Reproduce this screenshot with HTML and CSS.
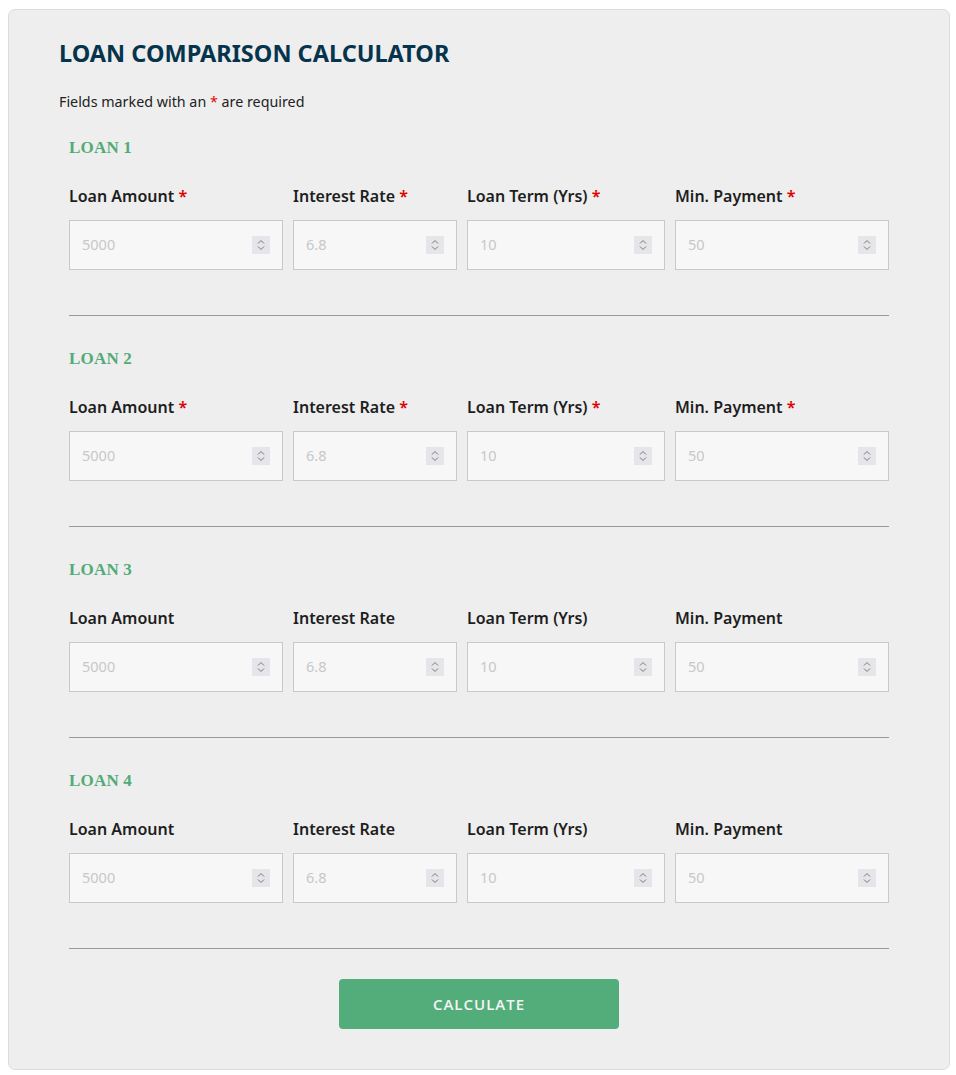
FILE: index.html
```html
<!DOCTYPE html>
<html>
<head>
<meta charset="utf-8">
<link rel="stylesheet" href="styles.css">
</head>
<body>
<div class="calc">
  <h1 class="title">LOAN COMPARISON CALCULATOR</h1>
  <p class="note">Fields marked with an <span class="req">*</span> are required</p>

  <section class="loan">
    <h2 class="loan-title">LOAN 1</h2>
    <div class="grid">
      <label class="lbl">Loan Amount <span class="req">*</span></label>
      <label class="lbl">Interest Rate <span class="req">*</span></label>
      <label class="lbl">Loan Term (Yrs) <span class="req">*</span></label>
      <label class="lbl">Min. Payment <span class="req">*</span></label>
      <div class="field"><input class="inp" type="text" size="4" placeholder="5000"><span class="spin"><svg width="18" height="18" viewBox="0 0 18 18"><polyline points="6,7.5 9,4.5 12,7.5" fill="none" stroke="#777" stroke-width="1"/><polyline points="6,10.5 9,13.5 12,10.5" fill="none" stroke="#777" stroke-width="1"/></svg></span></div>
      <div class="field"><input class="inp" type="text" size="4" placeholder="6.8"><span class="spin"><svg width="18" height="18" viewBox="0 0 18 18"><polyline points="6,7.5 9,4.5 12,7.5" fill="none" stroke="#777" stroke-width="1"/><polyline points="6,10.5 9,13.5 12,10.5" fill="none" stroke="#777" stroke-width="1"/></svg></span></div>
      <div class="field"><input class="inp" type="text" size="4" placeholder="10"><span class="spin"><svg width="18" height="18" viewBox="0 0 18 18"><polyline points="6,7.5 9,4.5 12,7.5" fill="none" stroke="#777" stroke-width="1"/><polyline points="6,10.5 9,13.5 12,10.5" fill="none" stroke="#777" stroke-width="1"/></svg></span></div>
      <div class="field"><input class="inp" type="text" size="4" placeholder="50"><span class="spin"><svg width="18" height="18" viewBox="0 0 18 18"><polyline points="6,7.5 9,4.5 12,7.5" fill="none" stroke="#777" stroke-width="1"/><polyline points="6,10.5 9,13.5 12,10.5" fill="none" stroke="#777" stroke-width="1"/></svg></span></div>
    </div>
    <hr class="divider">
  </section>

  <section class="loan">
    <h2 class="loan-title">LOAN 2</h2>
    <div class="grid">
      <label class="lbl">Loan Amount <span class="req">*</span></label>
      <label class="lbl">Interest Rate <span class="req">*</span></label>
      <label class="lbl">Loan Term (Yrs) <span class="req">*</span></label>
      <label class="lbl">Min. Payment <span class="req">*</span></label>
      <div class="field"><input class="inp" type="text" size="4" placeholder="5000"><span class="spin"><svg width="18" height="18" viewBox="0 0 18 18"><polyline points="6,7.5 9,4.5 12,7.5" fill="none" stroke="#777" stroke-width="1"/><polyline points="6,10.5 9,13.5 12,10.5" fill="none" stroke="#777" stroke-width="1"/></svg></span></div>
      <div class="field"><input class="inp" type="text" size="4" placeholder="6.8"><span class="spin"><svg width="18" height="18" viewBox="0 0 18 18"><polyline points="6,7.5 9,4.5 12,7.5" fill="none" stroke="#777" stroke-width="1"/><polyline points="6,10.5 9,13.5 12,10.5" fill="none" stroke="#777" stroke-width="1"/></svg></span></div>
      <div class="field"><input class="inp" type="text" size="4" placeholder="10"><span class="spin"><svg width="18" height="18" viewBox="0 0 18 18"><polyline points="6,7.5 9,4.5 12,7.5" fill="none" stroke="#777" stroke-width="1"/><polyline points="6,10.5 9,13.5 12,10.5" fill="none" stroke="#777" stroke-width="1"/></svg></span></div>
      <div class="field"><input class="inp" type="text" size="4" placeholder="50"><span class="spin"><svg width="18" height="18" viewBox="0 0 18 18"><polyline points="6,7.5 9,4.5 12,7.5" fill="none" stroke="#777" stroke-width="1"/><polyline points="6,10.5 9,13.5 12,10.5" fill="none" stroke="#777" stroke-width="1"/></svg></span></div>
    </div>
    <hr class="divider">
  </section>

  <section class="loan">
    <h2 class="loan-title">LOAN 3</h2>
    <div class="grid">
      <label class="lbl">Loan Amount</label>
      <label class="lbl">Interest Rate</label>
      <label class="lbl">Loan Term (Yrs)</label>
      <label class="lbl">Min. Payment</label>
      <div class="field"><input class="inp" type="text" size="4" placeholder="5000"><span class="spin"><svg width="18" height="18" viewBox="0 0 18 18"><polyline points="6,7.5 9,4.5 12,7.5" fill="none" stroke="#777" stroke-width="1"/><polyline points="6,10.5 9,13.5 12,10.5" fill="none" stroke="#777" stroke-width="1"/></svg></span></div>
      <div class="field"><input class="inp" type="text" size="4" placeholder="6.8"><span class="spin"><svg width="18" height="18" viewBox="0 0 18 18"><polyline points="6,7.5 9,4.5 12,7.5" fill="none" stroke="#777" stroke-width="1"/><polyline points="6,10.5 9,13.5 12,10.5" fill="none" stroke="#777" stroke-width="1"/></svg></span></div>
      <div class="field"><input class="inp" type="text" size="4" placeholder="10"><span class="spin"><svg width="18" height="18" viewBox="0 0 18 18"><polyline points="6,7.5 9,4.5 12,7.5" fill="none" stroke="#777" stroke-width="1"/><polyline points="6,10.5 9,13.5 12,10.5" fill="none" stroke="#777" stroke-width="1"/></svg></span></div>
      <div class="field"><input class="inp" type="text" size="4" placeholder="50"><span class="spin"><svg width="18" height="18" viewBox="0 0 18 18"><polyline points="6,7.5 9,4.5 12,7.5" fill="none" stroke="#777" stroke-width="1"/><polyline points="6,10.5 9,13.5 12,10.5" fill="none" stroke="#777" stroke-width="1"/></svg></span></div>
    </div>
    <hr class="divider">
  </section>

  <section class="loan">
    <h2 class="loan-title">LOAN 4</h2>
    <div class="grid">
      <label class="lbl">Loan Amount</label>
      <label class="lbl">Interest Rate</label>
      <label class="lbl">Loan Term (Yrs)</label>
      <label class="lbl">Min. Payment</label>
      <div class="field"><input class="inp" type="text" size="4" placeholder="5000"><span class="spin"><svg width="18" height="18" viewBox="0 0 18 18"><polyline points="6,7.5 9,4.5 12,7.5" fill="none" stroke="#777" stroke-width="1"/><polyline points="6,10.5 9,13.5 12,10.5" fill="none" stroke="#777" stroke-width="1"/></svg></span></div>
      <div class="field"><input class="inp" type="text" size="4" placeholder="6.8"><span class="spin"><svg width="18" height="18" viewBox="0 0 18 18"><polyline points="6,7.5 9,4.5 12,7.5" fill="none" stroke="#777" stroke-width="1"/><polyline points="6,10.5 9,13.5 12,10.5" fill="none" stroke="#777" stroke-width="1"/></svg></span></div>
      <div class="field"><input class="inp" type="text" size="4" placeholder="10"><span class="spin"><svg width="18" height="18" viewBox="0 0 18 18"><polyline points="6,7.5 9,4.5 12,7.5" fill="none" stroke="#777" stroke-width="1"/><polyline points="6,10.5 9,13.5 12,10.5" fill="none" stroke="#777" stroke-width="1"/></svg></span></div>
      <div class="field"><input class="inp" type="text" size="4" placeholder="50"><span class="spin"><svg width="18" height="18" viewBox="0 0 18 18"><polyline points="6,7.5 9,4.5 12,7.5" fill="none" stroke="#777" stroke-width="1"/><polyline points="6,10.5 9,13.5 12,10.5" fill="none" stroke="#777" stroke-width="1"/></svg></span></div>
    </div>
    <hr class="divider">
  </section>

  <div class="actions">
    <button class="btn" type="button">CALCULATE</button>
  </div>
</div>
</body>
</html>
```

FILE: styles.css
```css
* { box-sizing: border-box; }
html, body { margin: 0; padding: 0; background: #fff; }
body { font-family: "Noto Sans", "Open Sans", sans-serif; color: #222; }

.calc {
  margin: 9px 6px 0 8px;
  height: 1061px;
  background: #eeeeee;
  border: 1px solid #dcdcdc;
  border-radius: 7px;
  padding: 28px 50px 40px 50px;
}

.title {
  margin: 0;
  font-size: 23.5px;
  line-height: 30px;
  font-weight: 700;
  color: #06344d;
}

.note {
  margin: 23px 0 0 0;
  font-size: 14.3px;
  line-height: 22px;
  color: #222;
}

.req { color: #e00000; }

.loan {
  padding: 0 10px;
  margin-top: 23px;
}
.loan + .loan { margin-top: 31px; }

.loan-title {
  margin: 0;
  font-family: "Liberation Serif", "DejaVu Serif", serif;
  font-weight: 700;
  font-size: 17px;
  line-height: 24px;
  color: #52ab77;
  letter-spacing: 0.2px;
}

.grid {
  margin-top: 24px;
  display: grid;
  grid-template-columns: minmax(0, 214fr) minmax(0, 164fr) minmax(0, 198fr) minmax(0, 214fr);
  column-gap: 10px;
  row-gap: 12px;
}

.lbl {
  font-size: 16px;
  line-height: 24px;
  font-weight: 600;
  color: #1e1e1e;
  white-space: nowrap;
}

.field {
  min-width: 0;
  height: 50px;
  border: 1px solid #c9c9c9;
  background: #f7f7f7;
  display: flex;
  align-items: center;
  padding: 0 12px;
}

.inp {
  flex: 1;
  min-width: 0;
  width: 0;
  border: 0;
  background: transparent;
  outline: none;
  font-family: "Noto Sans", sans-serif;
  font-size: 14.5px;
  color: #333;
  padding: 0;
  margin-top: -3px;
}
.inp::placeholder { color: #c8c8c8; }

.spin {
  flex: none;
  width: 18px;
  height: 18px;
  background: #e6e6ea;
  display: flex;
  align-items: center;
  justify-content: center;
}
.spin svg { display: block; }

.divider {
  margin: 45px 0 0 0;
  border: 0;
  border-top: 1px solid #9a9a9a;
  height: 0;
}

.actions {
  display: flex;
  justify-content: center;
  margin-top: 30px;
}

.btn {
  width: 280px;
  height: 50px;
  border: 0;
  border-radius: 4px;
  background: #53ad7a;
  color: #f4f4f4;
  font-family: "Open Sans", "Noto Sans", sans-serif;
  font-size: 15px;
  font-weight: 600;
  letter-spacing: 1px;
}
```
